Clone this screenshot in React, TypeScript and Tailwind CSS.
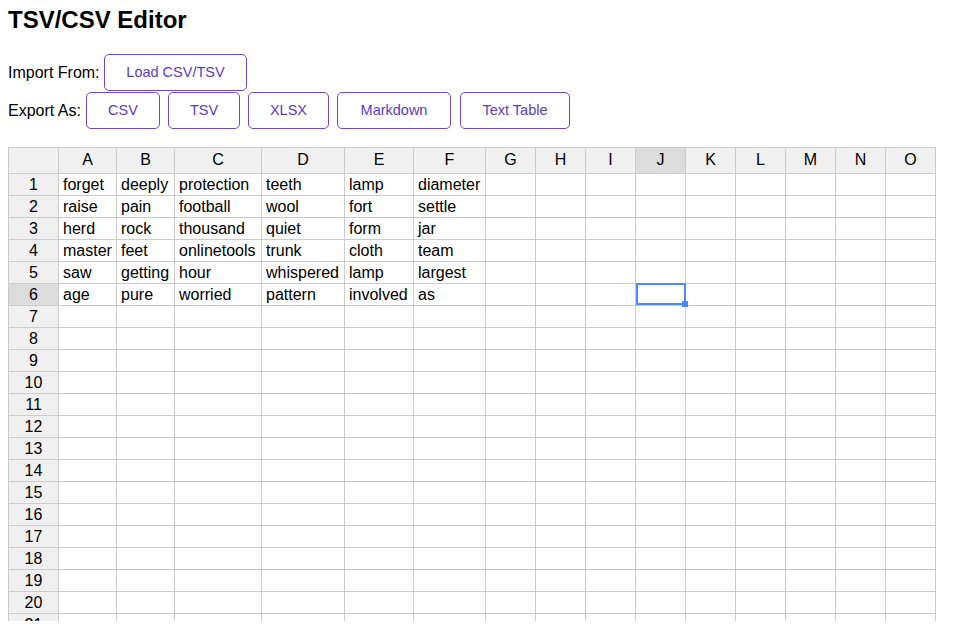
import React from "react";

const cols = ["A", "B", "C", "D", "E", "F", "G", "H", "I", "J", "K", "L", "M", "N", "O"];
const data: string[][] = [
  ["forget", "deeply", "protection", "teeth", "lamp", "diameter"],
  ["raise", "pain", "football", "wool", "fort", "settle"],
  ["herd", "rock", "thousand", "quiet", "form", "jar"],
  ["master", "feet", "onlinetools", "trunk", "cloth", "team"],
  ["saw", "getting", "hour", "whispered", "lamp", "largest"],
  ["age", "pure", "worried", "pattern", "involved", "as"],
];

function Btn({ children, w }: { children: React.ReactNode; w: string }) {
  return (
    <button
      className={`${w} h-[37px] rounded-[5px] border border-[#6c45dc] bg-white text-[14.5px] text-[#5a3cc8] flex items-center justify-center`}
    >
      {children}
    </button>
  );
}

export default function App() {
  const rows = Array.from({ length: 22 }, (_, i) => i + 1);
  return (
    <div className="w-[969px] h-[631px] overflow-hidden bg-white px-2 text-black font-['Liberation_Sans',Arial,sans-serif]">
      <h1 className="pt-[6px] text-[24px] font-bold leading-[28px]">TSV/CSV Editor</h1>
      <div className="mt-[20px] flex h-[38px] items-start">
        <span className="w-[96px] text-[16px] leading-[37px]">Import From:</span>
        <Btn w="w-[143px]">Load CSV/TSV</Btn>
      </div>
      <div className="flex h-[38px] items-start gap-[8px]">
        <span className="w-[70px] text-[16px] leading-[37px] whitespace-nowrap">Export As:</span>
        <Btn w="w-[74px]">CSV</Btn>
        <Btn w="w-[72px]">TSV</Btn>
        <Btn w="w-[81px]">XLSX</Btn>
        <Btn w="w-[114px]">Markdown</Btn>
        <div className="ml-[1px]">
          <Btn w="w-[110px]">Text Table</Btn>
        </div>
      </div>
      <div className="relative mt-[17px] h-[474px] w-[928px] overflow-hidden">
        <div className="grid grid-cols-[50px_58px_58px_87px_83px_69px_72px_repeat(9,50px)] border-l border-t border-[#cccccc] text-[16px]">
          <div className="h-[26px] border-b border-r border-[#cccccc] bg-[#f0f0f0]" />
          {cols.map((c) => (
            <div
              key={c}
              className={`h-[26px] border-b border-r border-[#cccccc] text-center leading-[23px] ${
                c === "J" ? "bg-[#dcdcdc]" : "bg-[#f0f0f0]"
              }`}
            >
              {c}
            </div>
          ))}
          {rows.map((r) => (
            <React.Fragment key={r}>
              <div
                className={`h-[22px] border-b border-r border-[#cccccc] text-center leading-[21px] ${
                  r === 6 ? "bg-[#dcdcdc]" : "bg-[#f0f0f0]"
                }`}
              >
                {r}
              </div>
              {cols.map((c, ci) => (
                <div
                  key={c}
                  className="h-[22px] overflow-hidden whitespace-nowrap border-b border-r border-[#cccccc] bg-white px-[4px] leading-[21px]"
                >
                  {data[r - 1]?.[ci] ?? ""}
                </div>
              ))}
            </React.Fragment>
          ))}
        </div>
        <div className="pointer-events-none absolute left-[628px] top-[136px] h-[22px] w-[50px] border-2 border-[#4b89ff]" />
        <div className="pointer-events-none absolute left-[674px] top-[154px] h-[6px] w-[6px] bg-[#4b89ff]" />
      </div>
    </div>
  );
}
